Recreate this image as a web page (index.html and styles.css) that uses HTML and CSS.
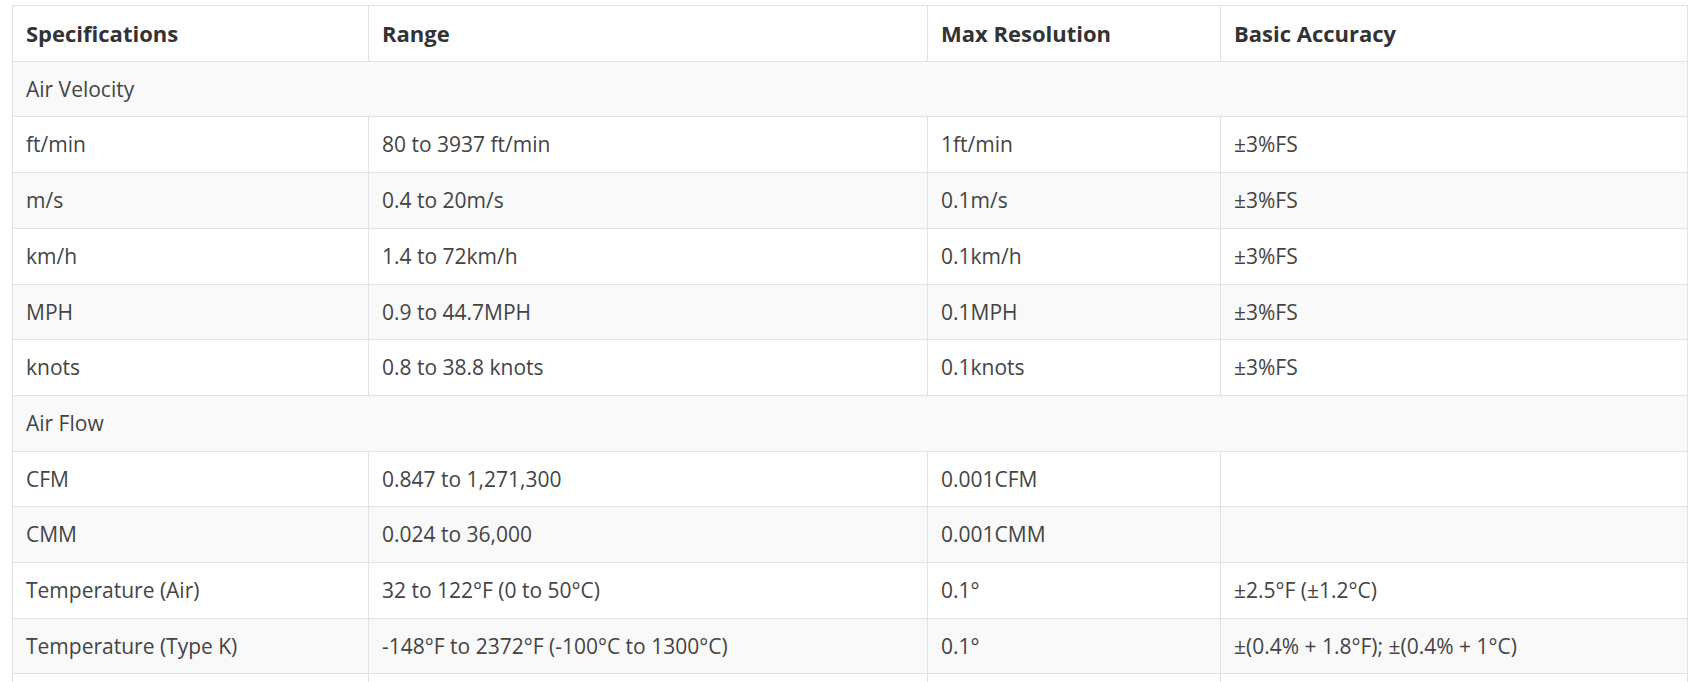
FILE: index.html
```html
<!DOCTYPE html>
<html lang="en">
<head>
<meta charset="utf-8">
<title>Specifications</title>
<link rel="stylesheet" href="styles.css">
</head>
<body>
<div class="wrap">
<table class="spec">
<colgroup>
<col class="c1"><col class="c2"><col class="c3"><col class="c4">
</colgroup>
<thead>
<tr><th>Specifications</th><th>Range</th><th>Max Resolution</th><th>Basic Accuracy</th></tr>
</thead>
<tbody>
<tr><td colspan="4">Air Velocity</td></tr>
<tr><td>ft/min</td><td>80 to 3937 ft/min</td><td>1ft/min</td><td>±3%FS</td></tr>
<tr><td>m/s</td><td>0.4 to 20m/s</td><td>0.1m/s</td><td>±3%FS</td></tr>
<tr><td>km/h</td><td>1.4 to 72km/h</td><td>0.1km/h</td><td>±3%FS</td></tr>
<tr><td>MPH</td><td>0.9 to 44.7MPH</td><td>0.1MPH</td><td>±3%FS</td></tr>
<tr><td>knots</td><td>0.8 to 38.8 knots</td><td>0.1knots</td><td>±3%FS</td></tr>
<tr><td colspan="4">Air Flow</td></tr>
<tr><td>CFM</td><td>0.847 to 1,271,300</td><td>0.001CFM</td><td></td></tr>
<tr><td>CMM</td><td>0.024 to 36,000</td><td>0.001CMM</td><td></td></tr>
<tr><td>Temperature (Air)</td><td>32 to 122°F (0 to 50°C)</td><td>0.1°</td><td>±2.5°F (±1.2°C)</td></tr>
<tr><td>Temperature (Type K)</td><td>-148°F to 2372°F (-100°C to 1300°C)</td><td>0.1°</td><td>±(0.4% + 1.8°F); ±(0.4% + 1°C)</td></tr>
<tr><td>&nbsp;</td><td>&nbsp;</td><td>&nbsp;</td><td>&nbsp;</td></tr>
</tbody>
</table>
</div>
</body>
</html>
```

FILE: styles.css
```css
html, body {
  margin: 0;
  padding: 0;
  background: #fff;
}
.wrap {
  padding: 5px 12px 0 12px;
}
.spec {
  width: 1675px;
  border-collapse: collapse;
  table-layout: fixed;
  font-family: "Open Sans", "Liberation Sans", sans-serif;
  font-size: 21px;
  line-height: 28.7px;
  color: #444;
}
.c1 { width: 356px; }
.c2 { width: 559px; }
.c3 { width: 293px; }
.c4 { width: 467px; }
.spec th,
.spec td {
  border: 1px solid #e2e2e2;
  padding: 13px 13px;
  text-align: left;
  vertical-align: middle;
  white-space: nowrap;
}
.spec th {
  font-size: 22px;
  font-weight: 700;
  color: #333;
}
.spec tbody tr:nth-child(odd) {
  background: #f9f9f9;
}
```
